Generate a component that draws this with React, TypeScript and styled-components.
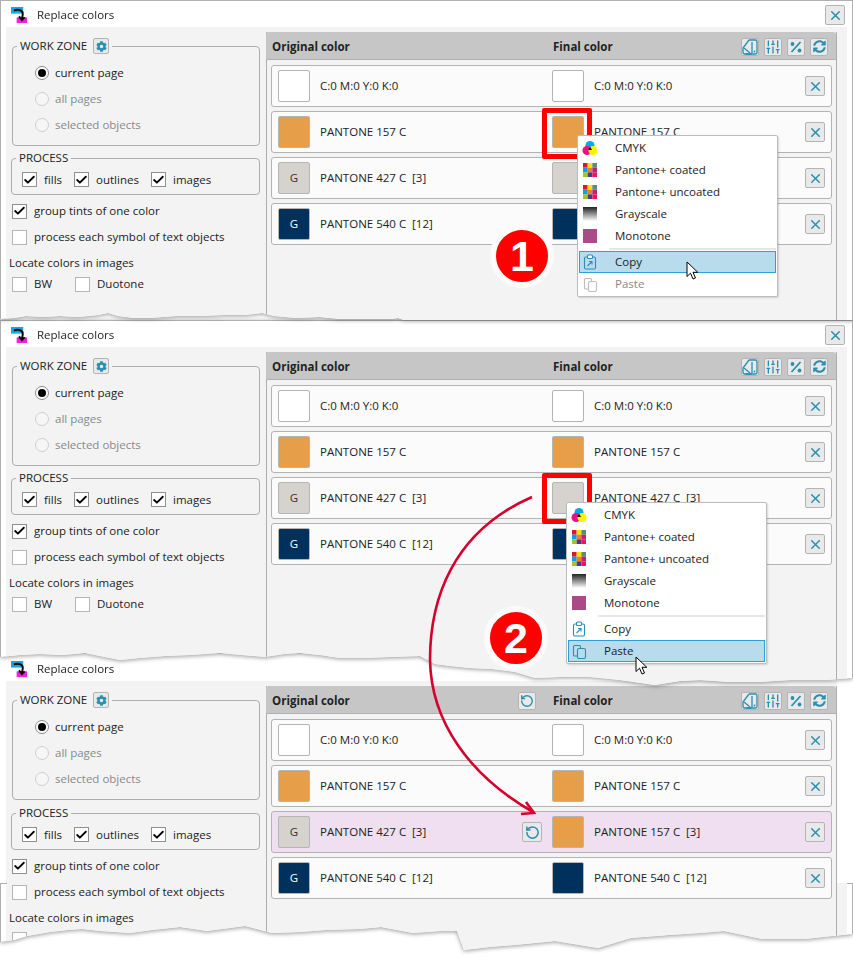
import React, { FC, ReactNode } from 'react';
import styled, { createGlobalStyle } from 'styled-components';
import { Check, RotateCcw, SlidersVertical, X } from 'lucide-react';
import { FaCog, FaSyncAlt } from 'react-icons/fa';

const Global = createGlobalStyle`
    html, body { margin:0; padding:0; background:#fff; }
    body { font-family:"Open Sans", "Liberation Sans", sans-serif; font-size:11.5px; line-height:14px; color:#222; }
    button, legend { font:inherit; }
`;

const teal = '#2a8fb0';

const tornClip = (edge: number[][], top: number) => {
    const pts = edge.map(([x, y]) => `${x}px ${y - top}px`);
    return `polygon(0px 0px, 853px 0px, 853px ${edge[edge.length - 1][1] - top}px, ${pts.reverse().join(', ')})`;
};

const firstEdge = [
    [0, 319], [14, 318], [26, 316], [42, 317], [60, 316], [78, 317], [98, 315], [108, 313], [118, 316], [134, 318],
    [150, 318], [176, 316], [200, 316], [224, 315], [244, 315], [262, 313], [274, 316], [296, 318], [320, 317], [340, 319],
    [392, 319], [398, 318], [404, 320], [853, 320],
];
const secondEdge = [
    [0, 657], [10, 656], [20, 655], [40, 654], [62, 655], [85, 653], [100, 656], [120, 660], [140, 658], [165, 656],
    [190, 655], [220, 653], [242, 655], [265, 657], [284, 654], [300, 653], [320, 655], [340, 658], [365, 658], [390, 657],
    [420, 656], [435, 664], [450, 666], [470, 668], [492, 669], [515, 672], [535, 678], [560, 677], [590, 677], [620, 680],
    [655, 685], [680, 681], [700, 680], [730, 682], [760, 682], [790, 680], [825, 680], [853, 678],
];
const thirdEdge = [
    [0, 942], [14, 940], [27, 936], [50, 932], [68, 930], [82, 929], [100, 931], [130, 933], [152, 930], [180, 927], [207, 931],
    [245, 926], [272, 933], [300, 932], [326, 930], [360, 929], [381, 927], [413, 933], [440, 931], [457, 931], [464, 950],
    [490, 947], [525, 944], [555, 941], [598, 948], [631, 938], [669, 935], [700, 933], [724, 931], [762, 939], [805, 939],
    [832, 936], [853, 934],
];

const Page = styled.div`
    position:relative;
    width:853px;
    height:957px;
    overflow:hidden;
    background:#fff;
`;

const Slice = styled.div<{ $height:number; $overhang:number; $layer:number }>`
    position:relative;
    z-index:${p => p.$layer};
    height:${p => p.$height + p.$overhang}px;
    margin-bottom:${p => -p.$overhang}px;
    filter:drop-shadow(0 1px 2px rgba(0,0,0,.4));
`;

const Window = styled.div<{ $clip:string; $cropped?:boolean }>`
    position:relative;
    box-sizing:border-box;
    height:100%;
    display:flex;
    flex-direction:column;
    background:#fff;
    border:1px solid ${p => p.$cropped ? 'transparent' : '#b0b0b0'};
    border-bottom:none;
    clip-path:${p => p.$clip};
    ${p => p.$cropped ? `
    &::before, &::after {
        content:'';
        position:absolute;
        top:228px;
        width:6px;
        height:90px;
        border-top:1px solid #b0b0b0;
    }
    &::before { left:-1px; border-left:1px solid #b0b0b0; }
    &::after { right:-1px; width:5px; border-right:1px solid #b0b0b0; }
    ` : ''}
`;

const TitleBar = styled.div`
    box-sizing:border-box;
    flex:none;
    height:26px;
    display:flex;
    align-items:center;
    padding:2px 7px 0 10px;
`;

const Title = styled.span`
    margin-left:10px;
    flex-grow:1;
`;

const Body = styled.div<{ $cropped?:boolean }>`
    flex-grow:1;
    min-height:0;
    margin:0 5px;
    padding-top:5px;
    display:flex;
    background:${p => p.$cropped
        ? 'linear-gradient(#fff,#fff) right top / 10px 202px no-repeat, #f3f3f3'
        : '#f3f3f3'};
`;

const Side = styled.div`
    flex:none;
    width:260px;
`;

const Group = styled.fieldset<{ $left:number; $top:number; $height:number }>`
    box-sizing:border-box;
    width:${p => 254 - p.$left}px;
    height:${p => p.$height}px;
    margin:${p => p.$top}px 0 0 ${p => p.$left}px;
    padding:0;
    border:1px solid #adadad;
    border-radius:4px;
    min-width:0;
`;

const Legend = styled.legend`
    display:flex;
    align-items:center;
    height:16px;
    margin-left:4px;
    padding:0 3px;
`;

const IconButton = styled.button<{ $size?:number }>`
    box-sizing:border-box;
    flex:none;
    width:${p => p.$size ?? 20}px;
    height:${p => p.$size ?? 20}px;
    padding:0;
    display:flex;
    align-items:center;
    justify-content:center;
    background:#e9e9e9;
    border:1px solid #b4b4b4;
    border-radius:2px;
    color:${teal};
`;

const GearButton = styled(IconButton)`
    margin-left:6px;
`;

const RadioList = styled.div`
    display:flex;
    flex-direction:column;
    padding:6px 0 0 22px;
`;

const RadioRow = styled.div<{ $off?:boolean }>`
    height:26px;
    display:flex;
    align-items:center;
    gap:6px;
    color:${p => p.$off ? '#8a8a8a' : '#222'};
`;

const Radio = styled.span<{ $off?:boolean; $on?:boolean }>`
    box-sizing:border-box;
    width:14px;
    height:14px;
    border-radius:50%;
    border:1px solid ${p => p.$off ? '#cfcfcf' : '#8a8a8a'};
    background:${p => p.$off ? '#f6f6f6' : '#fff'};
    display:flex;
    align-items:center;
    justify-content:center;
    &::after {
        content:'';
        display:${p => p.$on ? 'block' : 'none'};
        width:8px;
        height:8px;
        border-radius:50%;
        background:#000;
    }
`;

const Box = styled.span<{ $on?:boolean }>`
    box-sizing:border-box;
    flex:none;
    width:15px;
    height:15px;
    background:#fff;
    border:1px solid ${p => p.$on ? '#8f8f8f' : '#b5b5b5'};
    display:flex;
    align-items:center;
    justify-content:center;
    color:#000;
`;

const Option = styled.label`
    display:flex;
    align-items:center;
    gap:7px;
`;

const ProcessGrid = styled.div`
    display:grid;
    grid-template-columns:52px 77px auto;
    padding:6px 0 0 10px;
`;

const OptionRow = styled.div`
    height:26px;
    margin-left:6px;
    display:flex;
    align-items:center;
`;

const Options = styled.div`
    margin-top:3px;
`;

const LocateLabel = styled.div`
    height:22px;
    margin:2px 0 0 3px;
    display:flex;
    align-items:center;
`;

const LocateGrid = styled.div`
    height:20px;
    margin-left:6px;
    display:grid;
    grid-template-columns:63px auto;
    align-items:center;
`;

const Panel = styled.div`
    box-sizing:border-box;
    flex:none;
    width:571px;
    border-left:1px solid #adadad;
    border-right:1px solid #adadad;
    display:flex;
    flex-direction:column;
`;

const Header = styled.div`
    flex:none;
    height:28px;
    margin-left:-1px;
    padding:2px 8px 0 6px;
    display:flex;
    align-items:center;
    background:#c6c6c6;
    border-bottom:1px solid #b0b0b0;
    box-sizing:border-box;
    border-radius:3px 3px 0 0;
    font-weight:700;
`;

const HeadCell = styled.div`
    width:246px;
`;

const HeadUndo = styled(IconButton)`
    margin-right:17px;
`;

const HeadSpacer = styled.span`
    width:35px;
`;

const HeadTools = styled.div`
    margin-left:auto;
    display:flex;
    gap:5px;
`;

const Rows = styled.div`
    padding:5px 4px 0;
    display:flex;
    flex-direction:column;
    gap:4px;
`;

const Row = styled.div<{ $changed?:boolean }>`
    box-sizing:border-box;
    height:42px;
    padding:0 6px;
    display:flex;
    align-items:center;
    background:${p => p.$changed ? '#efdff0' : '#fbfbfb'};
    border:1px solid #b3b3b3;
    border-radius:3px;
`;

const Cell = styled.div<{ $wide?:boolean }>`
    display:flex;
    align-items:center;
    width:${p => p.$wide ? '274px' : 'auto'};
`;

const Swatch = styled.div<{ $color:string; $ink?:string }>`
    box-sizing:border-box;
    flex:none;
    width:32px;
    height:32px;
    margin-right:10px;
    display:flex;
    align-items:center;
    justify-content:center;
    background:${p => p.$color};
    color:${p => p.$ink ?? '#333'};
    border:1px solid #b5b5b5;
    border-radius:2px;
`;

const ColorName = styled.span`
    white-space:pre;
`;

const RowUndo = styled(IconButton)`
    margin:0 10px 0 auto;
`;

const RowClose = styled(IconButton)`
    margin-left:auto;
`;

const RedFrame = styled.div<{ $left:number; $top:number }>`
    position:absolute;
    left:${p => p.$left}px;
    top:${p => p.$top}px;
    box-sizing:border-box;
    width:50px;
    height:51px;
    border:5px solid #f00;
    border-radius:2px;
`;

const Menu = styled.div<{ $left:number; $top:number }>`
    position:absolute;
    left:${p => p.$left}px;
    top:${p => p.$top}px;
    box-sizing:border-box;
    width:201px;
    padding:1px;
    background:#fff;
    border:1px solid #bdbdbd;
    border-radius:2px;
    box-shadow:1px 1px 2px rgba(0,0,0,.15);
`;

const MenuItem = styled.div<{ $active?:boolean; $off?:boolean }>`
    box-sizing:border-box;
    height:22px;
    padding-left:3px;
    display:flex;
    align-items:center;
    color:${p => p.$off ? '#8a8a8a' : '#222'};
    background:${p => p.$active ? '#b8dcec' : 'transparent'};
    border:1px solid ${p => p.$active ? '#2e9edb' : 'transparent'};
`;

const MenuIcon = styled.span`
    flex:none;
    width:32px;
    height:14px;
    display:block;
`;

const MenuSeparator = styled.div`
    height:2px;
    margin:1px 0 1px 30px;
    background:#e6e6e6;
`;

const Badge = styled.div<{ $left:number; $top:number }>`
    position:absolute;
    left:${p => p.$left}px;
    top:${p => p.$top}px;
    box-sizing:border-box;
    width:64px;
    height:64px;
    display:flex;
    align-items:center;
    justify-content:center;
    border-radius:50%;
    background:#f00;
    border:6px solid #fbfbfb;
    color:#fff;
    font-family:"Liberation Sans", sans-serif;
    font-size:43px;
    line-height:50px;
    font-weight:700;
`;

const Pointer = styled.svg<{ $left:number; $top:number }>`
    position:absolute;
    left:${p => p.$left}px;
    top:${p => p.$top}px;
`;

const ArrowLayer = styled.svg`
    position:absolute;
    left:0;
    top:0;
    z-index:5;
    pointer-events:none;
`;

const AppLogo = () => (
    <svg width="16" height="16" viewBox="0 0 17 17">
        <rect x="0" y="0" width="13" height="7" fill="#12a8e8" />
        <rect x="6" y="11" width="11" height="6" fill="#f020e0" />
        <path d="M3 3.5 C9 2 13 4 12.5 8 L11.5 13 M8.5 10 L11.5 14 L14.5 11" fill="none" stroke="#000" strokeWidth="2" />
    </svg>
);

const CmykIcon = () => (
    <svg width="16" height="16" viewBox="0 0 16 16" style={{ display: 'block', margin: '-1px 0 0 -1px' }}>
        <circle cx="8" cy="5.5" r="4.5" fill="#00a8e8" />
        <circle cx="5" cy="10.5" r="4.5" fill="#ec0f8c" />
        <circle cx="11" cy="10.5" r="4.5" fill="#fff200" />
        <path d="M8 6.5 L10 10 L6 10 Z" fill="#111" />
    </svg>
);

const pantoneColors = ['#e8112d', '#ffe100', '#5b8a7f', '#00a3e0', '#f47b20', '#b5267d', '#a7c520', '#463a8c', '#ed1556'];

const PantoneIcon = () => (
    <svg width="14" height="14" viewBox="0 0 15 15" style={{ display: 'block' }}>
        {pantoneColors.map((c, i) => (
            <rect key={c} x={(i % 3) * 5} y={Math.floor(i / 3) * 5} width="5" height="5" fill={c} />
        ))}
    </svg>
);

const GrayIcon: FC<{ id:string }> = ({ id }) => (
    <svg width="14" height="14" viewBox="0 0 14 14" style={{ display: 'block' }}>
        <defs>
            <linearGradient id={id} x1="0" y1="0" x2="0" y2="1">
                <stop offset="0" stopColor="#222" />
                <stop offset="1" stopColor="#fff" />
            </linearGradient>
        </defs>
        <rect width="14" height="14" fill={`url(#${id})`} />
    </svg>
);

const MonoIcon = () => (
    <svg width="14" height="14" viewBox="0 0 14 14" style={{ display: 'block' }}>
        <rect width="14" height="14" fill="#ab4a88" />
    </svg>
);

const CopyIcon = () => (
    <svg width="14" height="16" viewBox="0 0 14 16" fill="none" stroke={teal} strokeWidth="1.1" style={{ display: 'block', marginTop: -1 }}>
        <rect x="1.5" y="3" width="11" height="12" rx="1.5" />
        <rect x="4.5" y="1" width="5" height="3.5" rx="1" fill="#fff" />
        <path d="M4.5 12 L9 7.5 M6 7.5 H9 V10.5" />
    </svg>
);

const PasteIcon: FC<{ color:string }> = ({ color }) => (
    <svg width="15" height="15" viewBox="0 0 15 15" fill="none" stroke={color} strokeWidth="1.1" style={{ display: 'block' }}>
        <path d="M5 12 H2.5 A1 1 0 0 1 1.5 11 V2.5 A1 1 0 0 1 2.5 1.5 H7.5 A1 1 0 0 1 8.5 2.5 V4" />
        <rect x="5.5" y="4.5" width="8" height="10" rx="1.5" />
    </svg>
);

const FanIcon = () => (
    <svg width="16" height="16" viewBox="0 0 16 16" fill="none" stroke={teal} strokeWidth="1.3">
        <path d="M7 1 H13.5 A1.5 1.5 0 0 1 15 2.5 V13.5 A1.5 1.5 0 0 1 13.5 15 H4" />
        <path d="M7 1 L1 9 V13 A2 2 0 0 0 3 15 H8.5 A1.5 1.5 0 0 0 10 13.5 V3" />
        <path d="M2 9 L8 14" />
        <circle cx="12.5" cy="12.5" r="0.9" fill={teal} stroke="none" />
    </svg>
);

const PercentIcon = () => (
    <svg width="14" height="14" viewBox="0 0 14 14" fill={teal} stroke="none">
        <path d="M11.5 2 L2.5 12" stroke={teal} strokeWidth="1.8" />
        <circle cx="3.5" cy="4" r="1.9" />
        <circle cx="10.5" cy="10.5" r="1.9" />
    </svg>
);

const Cursor: FC<{ left:number; top:number }> = ({ left, top }) => (
    <Pointer $left={left} $top={top} width="13" height="19" viewBox="0 0 13 19">
        <path d="M1 1 V15.5 L4.5 12.2 L7 18 L9.5 17 L7 11.3 H11.8 Z" fill="#fff" stroke="#000" strokeWidth="1" strokeLinejoin="round" />
    </Pointer>
);

const ContextMenu: FC<{ left:number; top:number; mode:'copy' | 'paste'; id:string }> = ({ left, top, mode, id }) => (
    <Menu $left={left} $top={top}>
        <MenuItem><MenuIcon><CmykIcon /></MenuIcon>CMYK</MenuItem>
        <MenuItem><MenuIcon><PantoneIcon /></MenuIcon>Pantone+ coated</MenuItem>
        <MenuItem><MenuIcon><PantoneIcon /></MenuIcon>Pantone+ uncoated</MenuItem>
        <MenuItem><MenuIcon><GrayIcon id={id} /></MenuIcon>Grayscale</MenuItem>
        <MenuItem><MenuIcon><MonoIcon /></MenuIcon>Monotone</MenuItem>
        <MenuSeparator />
        <MenuItem $active={mode === 'copy'}><MenuIcon><CopyIcon /></MenuIcon>Copy</MenuItem>
        <MenuItem $active={mode === 'paste'} $off={mode === 'copy'}>
            <MenuIcon><PasteIcon color={mode === 'copy' ? '#bdbdbd' : teal} /></MenuIcon>Paste
        </MenuItem>
    </Menu>
);

interface IColor {
    color:string;
    name:string;
    mark?:string;
    ink?:string;
}

interface IRow {
    from:IColor;
    to:IColor;
    changed?:boolean;
}

const white = '#ffffff';
const orange = '#e69f48';
const stone = '#d6d3ce';
const navy = '#00315c';

const startRows:IRow[] = [
    { from: { color: white, name: 'C:0 M:0 Y:0 K:0' }, to: { color: white, name: 'C:0 M:0 Y:0 K:0' } },
    { from: { color: orange, name: 'PANTONE 157 C' }, to: { color: orange, name: 'PANTONE 157 C' } },
    { from: { color: stone, name: 'PANTONE 427 C  [3]', mark: 'G' }, to: { color: stone, name: 'PANTONE 427 C  [3]' } },
    { from: { color: navy, name: 'PANTONE 540 C  [12]', mark: 'G', ink: '#fff' }, to: { color: navy, name: 'PANTONE 540 C  [12]' } },
];

const doneRows:IRow[] = [
    startRows[0],
    startRows[1],
    { from: startRows[2].from, to: { color: orange, name: 'PANTONE 157 C  [3]' }, changed: true },
    startRows[3],
];

const Tick = () => <Check size={14} strokeWidth={3.4} />;

const ReplaceWindow: FC<{
    rows:IRow[];
    clip:string;
    cropped?:boolean;
    processGap?:number;
    showUndo?:boolean;
    children?:ReactNode;
}> = ({ rows, clip, cropped, processGap = 4, showUndo, children }) => (
    <Window $clip={clip} $cropped={cropped}>
        <TitleBar>
            <AppLogo />
            <Title>Replace colors</Title>
            <IconButton><X size={15} strokeWidth={2.4} /></IconButton>
        </TitleBar>
        <Body $cropped={cropped}>
            <Side>
                <Group $left={6} $top={6} $height={108}>
                    <Legend>
                        WORK ZONE
                        <GearButton $size={16}><FaCog size={11} /></GearButton>
                    </Legend>
                    <RadioList>
                        <RadioRow><Radio $on />current page</RadioRow>
                        <RadioRow $off><Radio $off />all pages</RadioRow>
                        <RadioRow $off><Radio $off />selected objects</RadioRow>
                    </RadioList>
                </Group>
                <Group $left={5} $top={processGap} $height={45}>
                    <Legend>PROCESS</Legend>
                    <ProcessGrid>
                        <Option><Box $on><Tick /></Box>fills</Option>
                        <Option><Box $on><Tick /></Box>outlines</Option>
                        <Option><Box $on><Tick /></Box>images</Option>
                    </ProcessGrid>
                </Group>
                <Options>
                    <OptionRow><Option><Box $on><Tick /></Box>group tints of one color</Option></OptionRow>
                    <OptionRow><Option><Box />process each symbol of text objects</Option></OptionRow>
                </Options>
                <LocateLabel>Locate colors in images</LocateLabel>
                <LocateGrid>
                    <Option><Box />BW</Option>
                    <Option><Box />Duotone</Option>
                </LocateGrid>
            </Side>
            <Panel>
                <Header>
                    <HeadCell>Original color</HeadCell>
                    {showUndo ? <HeadUndo $size={18}><RotateCcw size={14} strokeWidth={2.4} /></HeadUndo> : <HeadSpacer />}
                    <span>Final color</span>
                    <HeadTools>
                        <IconButton $size={18}><FanIcon /></IconButton>
                        <IconButton $size={18}><SlidersVertical size={16} strokeWidth={2} /></IconButton>
                        <IconButton $size={18}><PercentIcon /></IconButton>
                        <IconButton $size={18}><FaSyncAlt size={13} /></IconButton>
                    </HeadTools>
                </Header>
                <Rows>
                    {rows.map(row => (
                        <Row key={row.from.name} $changed={row.changed}>
                            <Cell $wide>
                                <Swatch $color={row.from.color} $ink={row.from.ink}>{row.from.mark}</Swatch>
                                <ColorName>{row.from.name}</ColorName>
                                {row.changed && <RowUndo><RotateCcw size={15} strokeWidth={2.4} /></RowUndo>}
                            </Cell>
                            <Cell>
                                <Swatch $color={row.to.color} />
                                <ColorName>{row.to.name}</ColorName>
                            </Cell>
                            <RowClose><X size={15} strokeWidth={2.4} /></RowClose>
                        </Row>
                    ))}
                </Rows>
            </Panel>
        </Body>
        {children}
    </Window>
);

const App: FC = () => (
    <Page>
        <Global />
        <Slice $height={320} $overhang={0} $layer={3}>
            <ReplaceWindow rows={startRows} clip={tornClip(firstEdge, 0)}>
                <RedFrame $left={541} $top={107} />
                <ContextMenu left={576} top={134} mode="copy" id="gray-a" />
                <Badge $left={489} $top={223}>1</Badge>
                <Cursor left={685} top={260} />
            </ReplaceWindow>
        </Slice>
        <Slice $height={334} $overhang={32} $layer={2}>
            <ReplaceWindow rows={startRows} clip={tornClip(secondEdge, 320)}>
                <RedFrame $left={541} $top={152} />
                <ContextMenu left={565} top={181} mode="paste" id="gray-b" />
                <Badge $left={483} $top={285}>2</Badge>
                <Cursor left={634} top={335} />
            </ReplaceWindow>
        </Slice>
        <Slice $height={303} $overhang={0} $layer={1}>
            <ReplaceWindow rows={doneRows} clip={tornClip(thirdEdge, 654)} cropped processGap={5} showUndo />
        </Slice>
        <ArrowLayer width="853" height="957" viewBox="0 0 853 957" fill="none" stroke="#d4002e" strokeWidth="2.6">
            <path d="M532 497 C452 532 430 600 430 660 C431 722 470 776 533 812" />
            <path d="M526 802 L534 813 L521 814" />
        </ArrowLayer>
    </Page>
);

export default App;
